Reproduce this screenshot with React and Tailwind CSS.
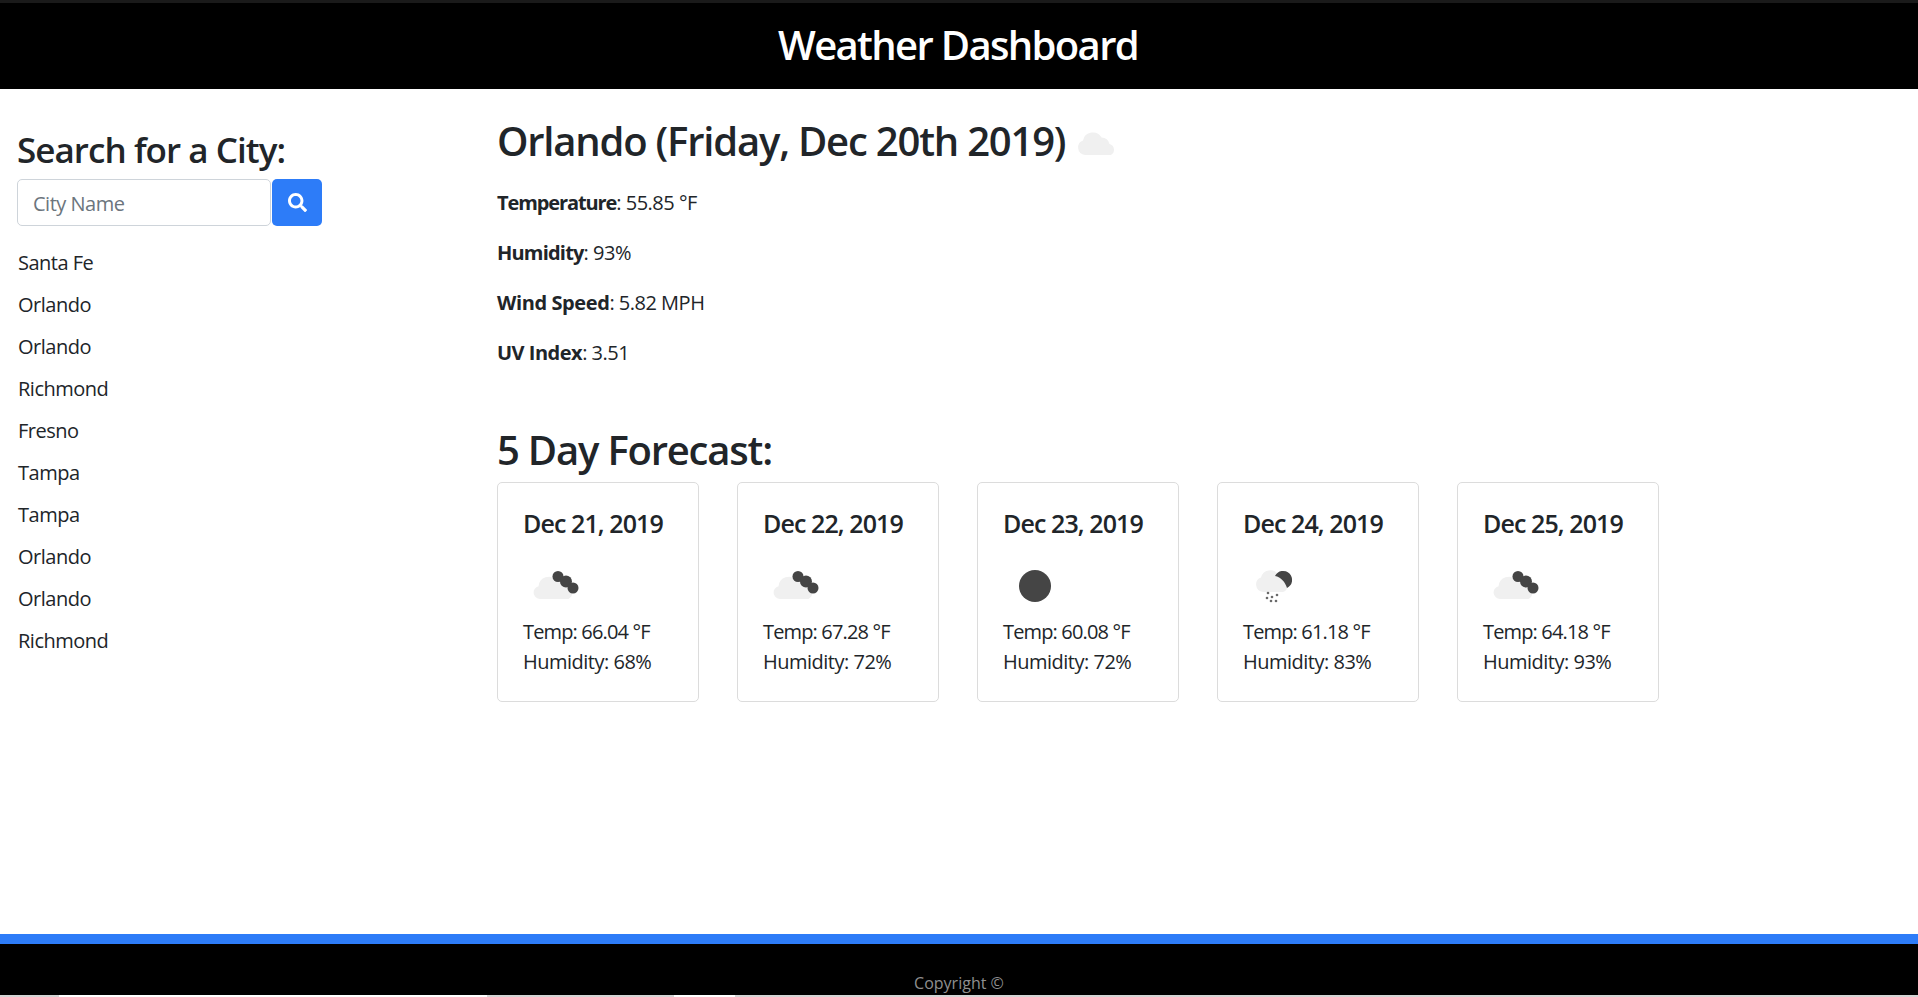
import { FaSearch } from "react-icons/fa";

const cities = ["Santa Fe", "Orlando", "Orlando", "Richmond", "Fresno", "Tampa", "Tampa", "Orlando", "Orlando", "Richmond"];

const forecast = [
  { date: "Dec 21, 2019", icon: "brokenClouds", temp: "66.04", humidity: "68" },
  { date: "Dec 22, 2019", icon: "brokenClouds", temp: "67.28", humidity: "72" },
  { date: "Dec 23, 2019", icon: "clear", temp: "60.08", humidity: "72" },
  { date: "Dec 24, 2019", icon: "rain", temp: "61.18", humidity: "83" },
  { date: "Dec 25, 2019", icon: "brokenClouds", temp: "64.18", humidity: "93" },
];

function WeatherIcon({ type }) {
  return (
    <svg viewBox="0 0 70 60" className="w-[70px] h-[60px] block">
      {type === "clear" && <circle cx="32" cy="29" r="16" fill="#454545" />}
      {type === "brokenClouds" && (
        <g>
          <path d="M17 42a6.5 6.5 0 0 1-1.500-12.800 10.500 10.500 0 0 1 18-6.200 9 9 0 0 1 10 6 7 7 0 0 1 2 13z" fill="#f0f0f0" />
          <g fill="#454545">
            <circle cx="35" cy="19.500" r="5.500" />
            <circle cx="43" cy="24.500" r="6" />
            <circle cx="50" cy="31" r="5.500" />
          </g>
        </g>
      )}
      {type === "rain" && (
        <g>
          <path d="M20 35a7.500 7.500 0 0 1-2-14.500 9.500 9.500 0 0 1 17-3l7 6a6.500 6.500 0 0 1-2 11.500z" fill="#f0f0f0" />
          <path d="M32 19A9 9 0 1 1 44 31C42 25 38 20 32 19z" fill="#454545" />
          <g fill="#6a6a6a">
            <circle cx="25" cy="36" r="1.300" />
            <circle cx="34" cy="38" r="1.300" />
            <circle cx="29" cy="40" r="1.300" />
            <circle cx="24" cy="41" r="1.300" />
            <circle cx="28" cy="44" r="1.300" />
            <circle cx="33" cy="44" r="1.300" />
          </g>
        </g>
      )}
    </svg>
  );
}

export default function App() {
  return (
    <div className="min-h-[997px] flex flex-col bg-white text-[#212529] text-[20px] leading-[30px] font-['Open_Sans',sans-serif] overflow-hidden">
      <header className="h-[89px] bg-black border-t-[3px] border-[#1a1a1a] flex items-center justify-center">
        <h1 className="text-white text-[40px] leading-[48px] font-semibold tracking-[-1.65px] mb-[3px] mr-[2px]">Weather Dashboard</h1>
      </header>

      <div className="flex flex-1">
        <aside className="w-[497px] pl-[18px] pt-[40px] shrink-0">
          <h3 className="text-[35px] leading-[42px] font-[550] tracking-[-0.95px] -ml-[1px] mb-[8px]">Search for a City:</h3>
          <div className="flex gap-[1px] mb-[16px] -ml-[1px]">
            <input
              placeholder="City Name"
              className="w-[254px] h-[47px] px-[15px] pt-[1px] border border-[#ced4da] rounded-[5px] text-[20px] tracking-[-0.5px] placeholder:text-[#6c757d] outline-none"
            />
            <button className="w-[50px] h-[47px] bg-[#2d7cf8] rounded-[5px] flex items-center justify-center">
              <FaSearch size={19} className="text-white" />
            </button>
          </div>
          <ul>
            {cities.map((city, i) => (
              <li key={i} className="h-[42px] flex items-center tracking-[-0.5px]">{city}</li>
            ))}
          </ul>
        </aside>

        <main className="flex-1 pt-[28px]">
          <div className="flex items-center h-[48px] mb-[23px]">
            <h2 className="text-[40px] leading-[48px] font-[550] tracking-[-1.2px]">Orlando (Friday, Dec 20th 2019)</h2>
            <svg viewBox="0 0 70 50" className="w-[70px] h-[50px] mt-[4px]">
              <path d="M20 37a7.500 7.500 0 0 1-2-14.500 10 10 0 0 1 18.500-3 8.500 8.500 0 0 1 8 6.500 6 6 0 0 1 1.500 11z" fill="#f0f0f0" />
            </svg>
          </div>
          <div className="flex flex-col gap-[20px] tracking-[-0.5px]">
            <p><strong className="font-bold tracking-[-1.1px]">Temperature</strong>: 55.85 °F</p>
            <p><strong className="font-bold tracking-[-0.8px]">Humidity</strong>: 93%</p>
            <p><strong className="font-bold tracking-[-0.4px]">Wind Speed</strong>: 5.82 MPH</p>
            <p><strong className="font-bold">UV Index</strong>: 3.51</p>
          </div>
          <h2 className="text-[40px] leading-[48px] font-[550] tracking-[-1.2px] mt-[58px] mb-[8px]">5 Day Forecast:</h2>
          <div className="flex gap-[38px]">
            {forecast.map((day) => (
              <div key={day.date} className="w-[202px] h-[220px] border border-[#dcdcdc] rounded-[5px] px-[25px] pt-[25px]">
                <h5 className="text-[25px] leading-[30px] font-[550] tracking-[-0.9px]">{day.date}</h5>
                <div className="mt-[19px]"><WeatherIcon type={day.icon} /></div>
                <p className="tracking-[-0.85px]">Temp: {day.temp} °F</p>
                <p className="tracking-[-0.5px]">Humidity: {day.humidity}%</p>
              </div>
            ))}
          </div>
        </main>
      </div>

      <footer className="h-[63px] border-t-[10px] border-[#2d7cf8] bg-black flex flex-col">
        <div className="flex-1 flex items-end justify-center text-[#8f8f8f] text-[16px] leading-[24px]">Copyright ©</div>
        <div className="h-[2px] flex bg-[#d4d4d4]">
          <div className="w-[59px]"></div>
          <div className="w-[428px] bg-white"></div>
          <div className="w-[187px]"></div>
          <div className="w-[61px] bg-white"></div>
        </div>
      </footer>
    </div>
  );
}
